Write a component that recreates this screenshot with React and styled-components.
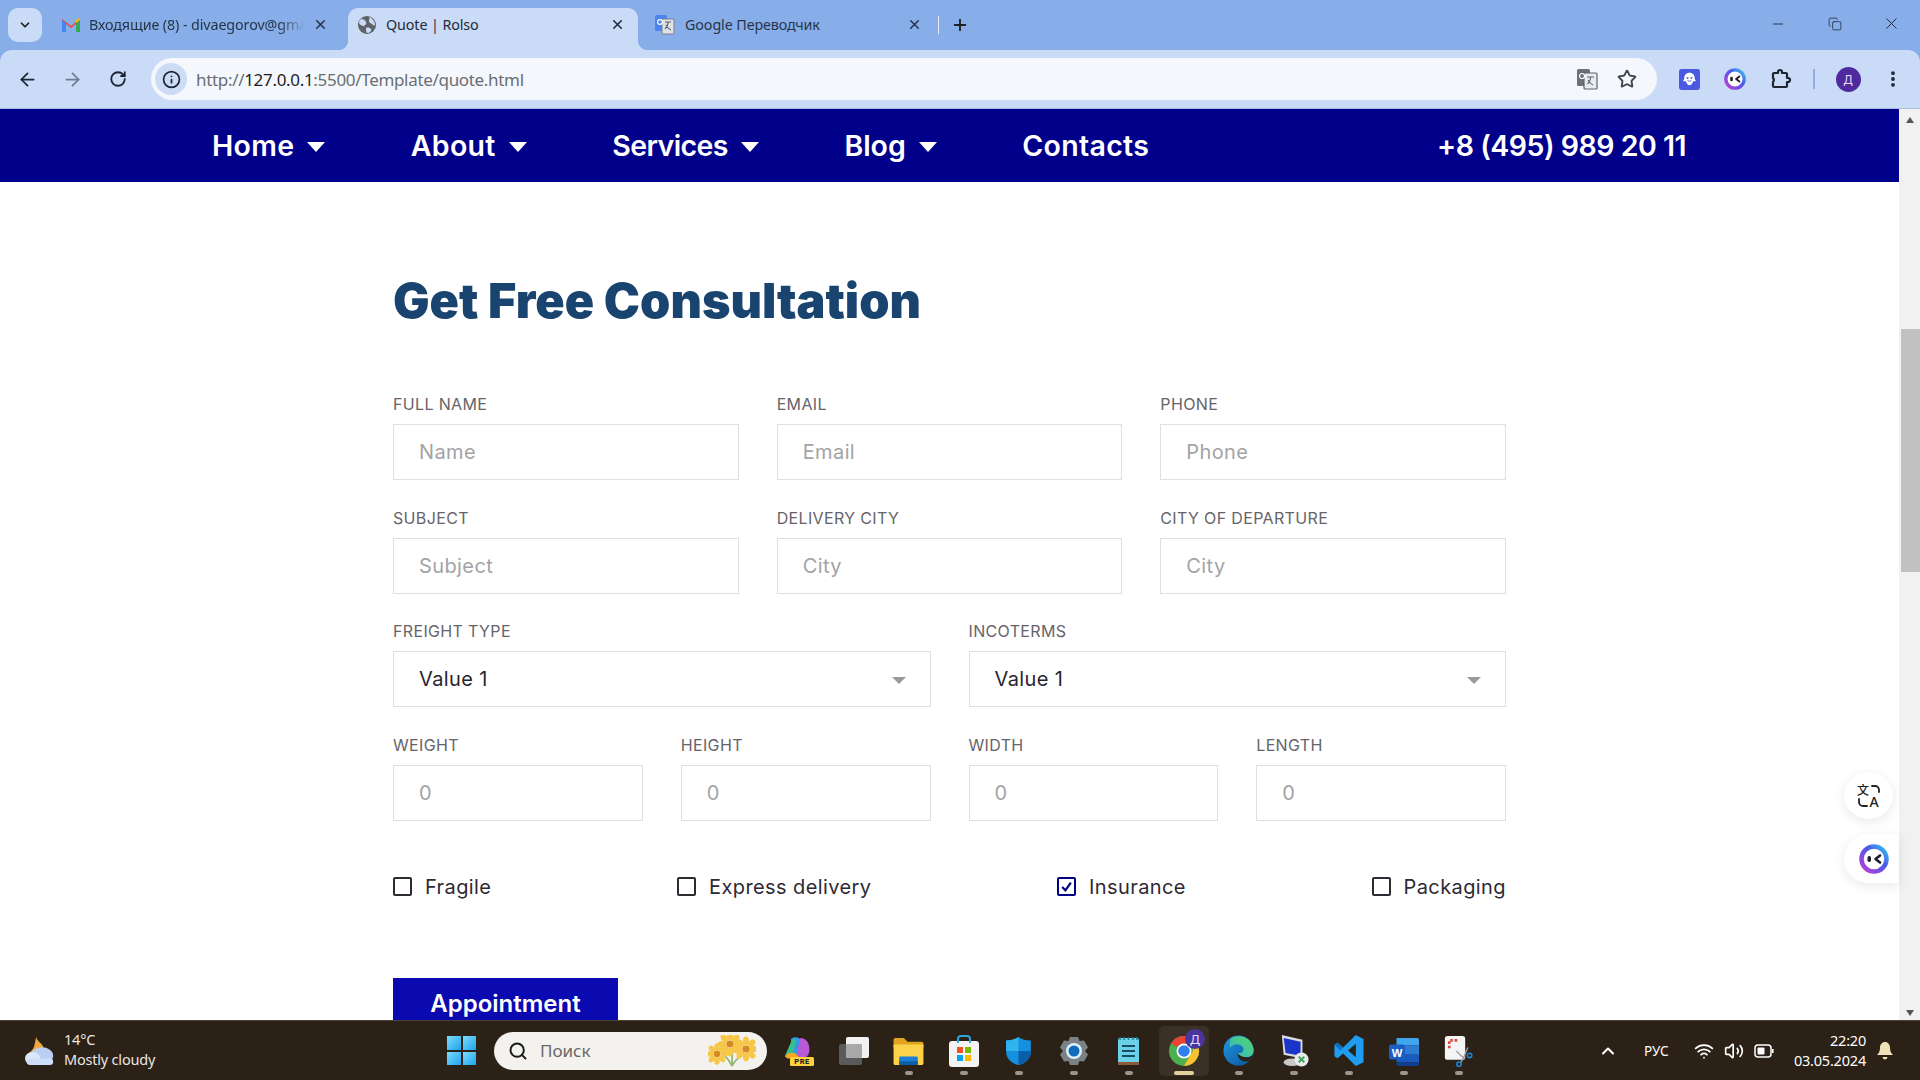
import React from "react";
import styled, { createGlobalStyle } from "styled-components";
import { ChevronDown, X, Plus, Minus, ArrowLeft, ArrowRight, RotateCw, Info, Star, MoreVertical, Search, ChevronUp, Wifi, Volume2, Copy } from "lucide-react";

const Global = createGlobalStyle`
  html, body { margin: 0; padding: 0; height: 100%; background: #fff; overflow: hidden; }
  #root { height: 1080px; }
  * { box-sizing: border-box; }
`;
const Screen = styled.div`
  width: 1920px; height: 1080px; display: flex; flex-direction: column; overflow: hidden; position: relative; background: #87aee9;
  font-family: "Inter", "Liberation Sans", sans-serif;
`;
/* ---------- browser chrome ---------- */
const TabStrip = styled.div`
  height: 50px; flex: none; display: flex; align-items: flex-end; padding-left: 8px;
  font-family: "Noto Sans", sans-serif; color: #1f1f1f; position: relative;
`;
const TabMenu = styled.div`
  width: 34px; height: 34px; border-radius: 10px; background: #c9dbf6; display: flex; align-items: center; justify-content: center;
  margin: 0 16px 8px 0;
`;
const Tab = styled.div`
  width: ${p => p.$w}px; height: 42px; display: flex; align-items: center; gap: ${p => p.$gap || 10}px; flex: none; position: relative;
  padding: 0 ${p => p.$pr || 13}px 9px ${p => p.$pl || 10}px; font-size: 14.3px; letter-spacing: -0.1px; border-radius: 10px 10px 0 0;
  background: ${p => p.$active ? "#c9dbf6" : "transparent"};
  color: ${p => p.$active ? "#1f2a3a" : "#27354a"};
  ${p => p.$active ? `
    &::before, &::after { content: ""; position: absolute; bottom: 0; width: 10px; height: 10px; }
    &::before { left: -10px; background: radial-gradient(circle at 0 0, transparent 10px, #c9dbf6 10.5px); }
    &::after { right: -10px; background: radial-gradient(circle at 100% 0, transparent 10px, #c9dbf6 10.5px); }
  ` : ""}
`;
const TabTitle = styled.span`
  flex: 1; white-space: nowrap; overflow: hidden;
  ${p => p.$fade ? "-webkit-mask-image: linear-gradient(to right, #000 88%, transparent);" : ""}
`;
const TabPlus = styled.div`
  display: flex; align-items: center; height: 42px; padding-bottom: 9px; gap: 12px; margin-left: 0;
`;
const TabDivider = styled.div`
  width: 1px; height: 18px; background: #e6eefb;
`;
const WindowControls = styled.div`
  margin-left: auto; height: 50px; display: flex; align-items: center; padding: 0 0 3px 0;
`;
const WindowButton = styled.div`
  width: 57px; display: flex; align-items: center; justify-content: center; color: #1d2532;
`;
const Toolbar = styled.div`
  height: 59px; flex: none; background: #c9dbf6; border-bottom: 1px solid #a9bfe2; display: flex; align-items: center; padding: 0 0 0 13px;
  border-radius: 12px 12px 0 0; color: #2a3444;
`;
const NavIcon = styled.div`
  width: 28px; display: flex; justify-content: center; margin-right: ${p => p.$mr || 17}px;
  color: ${p => p.$muted ? "#6f7d92" : "#1d2532"};
`;
const Omnibox = styled.div`
  width: 1506px; height: 42px; border-radius: 21px; background: #f4f7fc; margin-left: -2px; display: flex; align-items: center; padding: 0 10px 0 4px;
`;
const SiteInfo = styled.div`
  width: 32px; height: 32px; border-radius: 50%; background: #cddcf4; display: flex; align-items: center; justify-content: center; margin-right: 9px; color: #1d2532;
`;
const Url = styled.div`
  flex: 1; font-family: "Noto Sans", sans-serif; font-size: 17px; letter-spacing: -0.32px; color: #6a6e75;
  b { font-weight: 400; color: #1f1f1f; }
`;
const OmniAction = styled.div`
  width: 40px; display: flex; justify-content: center; color: #3f4650;
`;
const ExtArea = styled.div`
  flex: 1; display: flex; align-items: center; padding-left: 10px; color: #1d2532;
`;
const ExtSlot = styled.div`
  width: 45px; display: flex; justify-content: center;
`;
const ExtDivider = styled.div`
  width: 1.500px; height: 20px; background: #93b0de; margin: 0 21px 0 11px;
`;
const Avatar = styled.div`
  width: 25px; height: 25px; border-radius: 50%; background: #4f2a9e; color: #e9ddff; font-size: 12px; display: flex; align-items: center; justify-content: center;
  font-family: "Noto Sans", sans-serif; margin-right: 22px;
`;
/* ---------- page viewport ---------- */
const Viewport = styled.div`
  flex: 1; min-height: 0; display: flex; position: relative; overflow: hidden;
`;
const Page = styled.div`
  flex: 1; min-width: 0; overflow: hidden; background: #fff;
`;
const Nav = styled.nav`
  height: 73px; background: #00008b; display: flex; align-items: center; padding: 0 213px 0 212px; color: #fff; gap: 85.500px;
  font-family: "Inter", sans-serif; font-weight: 600; font-size: 28.5px;
`;
const NavItem = styled.div`
  display: flex; align-items: center; gap: 13px; white-space: nowrap; letter-spacing: ${p => p.$ls ?? 0.3}px;
`;
const Caret = styled.span`
  width: 0; height: 0; border-left: 9px solid transparent; border-right: 9px solid transparent; border-top: 10px solid #fff; margin-top: 3px;
`;
const Phone = styled.div`
  margin-left: auto; white-space: nowrap; letter-spacing: -0.5px;
`;
const Form = styled.div`
  width: 1113px; margin: 0 0 0 393px; padding-top: 89px;
`;
const Title = styled.h1`
  margin: 0 0 64px; font-family: "Inter", sans-serif; font-weight: 900; font-size: 48.5px; line-height: 60px; color: #1a4470; letter-spacing: 0;
`;
const Grid = styled.div`
  display: grid; grid-template-columns: repeat(${p => p.$cols}, 1fr); column-gap: 38px; margin-bottom: 28.700px;
`;
const Field = styled.div``;
const Label = styled.div`
  font-family: "Inter", sans-serif; font-size: 16px; line-height: 18px; margin-bottom: 11px; color: #66646a; letter-spacing: 0.35px;
`;
const Input = styled.div`
  height: 56px; border: 1px solid #dfdfdf; display: flex; align-items: center; padding: 0 25px; font-family: "Inter", sans-serif; font-size: 20px;
  letter-spacing: 0.4px; color: ${p => p.$value ? "#2a2430" : "#a3a3a6"}; background: #fff;
`;
const SelectCaret = styled.span`
  margin-left: auto; margin-right: -1px; width: 0; height: 0; border-left: 7px solid transparent; border-right: 7px solid transparent; border-top: 7px solid #9a9a9a; margin-top: 3px;
`;
const Checks = styled.div`
  display: flex; justify-content: space-between; padding-top: 24px;
`;
const CheckItem = styled.div`
  display: flex; align-items: center; gap: 13px; font-family: "Inter", sans-serif; font-size: 20px; line-height: 26px; color: #2e2a33; letter-spacing: 0.4px;
`;
const Box = styled.span`
  width: 19px; height: 19px; border-radius: 2px; border: 2px solid ${p => p.$on ? "#00008b" : "#2e2a33"}; display: flex; align-items: center; justify-content: center; flex: none;
`;
const Button = styled.div`
  margin-top: 78px; width: 225px; height: 52px; background: #0a0ab0; color: #fff; display: flex; align-items: center; justify-content: center;
  font-family: "Inter", sans-serif; font-weight: 600; font-size: 24px;
`;
const Scrollbar = styled.div`
  width: 21px; flex: none; background: #f1f1f1; position: relative; display: flex; flex-direction: column; align-items: center; justify-content: space-between; padding: 8px 0 4px;
`;
const ScrollThumb = styled.div`
  position: absolute; left: 2px; right: 0; top: 220px; height: 243px; background: #c1c1c1;
`;
const ScrollArrow = styled.span`
  width: 0; height: 0; border-left: 4px solid transparent; border-right: 4px solid transparent;
  ${p => p.$down ? "border-top: 6px solid #555;" : "border-bottom: 6px solid #555;"}
`;
const FloatButton = styled.div`
  position: absolute; right: ${p => p.$right}px; top: ${p => p.$top}px; width: ${p => p.$w}px; height: ${p => p.$h}px; background: #fff;
  border-radius: ${p => p.$tab ? "24px 0 0 24px" : "50%"}; box-shadow: 0 3px 12px rgba(0,0,0,.09); display: flex; align-items: center; justify-content: center; color: #333; z-index: 2;
  ${p => p.$tab ? "padding-left: 4px;" : ""}
`;
/* ---------- taskbar ---------- */
const Taskbar = styled.div`
  height: 60px; flex: none; background: #2b2117; border-top: 1px solid #4a433b; display: flex; align-items: center; color: #fff; position: relative;
  font-family: "Noto Sans", sans-serif;
`;
const Weather = styled.div`
  width: 447px; flex: none; display: flex; align-items: center; padding-left: 24px; gap: 8px;
`;
const WeatherText = styled.div`
  font-size: 14.500px; line-height: 20px; letter-spacing: -0.2px; color: #e9e6e2; margin-top: -3px;
`;
const Apps = styled.div`
  display: flex; align-items: center; height: 59px;
`;
const WinLogo = styled.div`
  width: 29px; height: 29px; display: grid; grid-template-columns: 1fr 1fr; gap: 2px; margin-right: 18px;
  span { background: linear-gradient(135deg,#7fdcfb,#1aa3ee); }
`;
const SearchBox = styled.div`
  width: 273px; height: 38px; border-radius: 20px; background: #f4f2ee; display: flex; align-items: center; padding: 0 11px 0 14px; gap: 12px; color: #1b1b1b; font-size: 17px; margin-right: 4px;
`;
const SearchText = styled.span`
  flex: 1; color: #6a6864;
`;
const AppSlot = styled.div`
  width: 50px; height: 50px; margin: 0 2.500px; display: flex; align-items: center; justify-content: center; position: relative; flex: none;
  ${p => p.$active ? "background: #3a3026; border-radius: 5px;" : ""}
`;
const Dot = styled.span`
  position: absolute; bottom: 1px; left: 50%; transform: translateX(-50%); width: ${p => p.$active ? 20 : 8}px; height: 4px; border-radius: 2px; background: ${p => p.$active ? "#e0d19f" : "#9a9590"};
`;
const Tray = styled.div`
  margin-left: auto; display: flex; align-items: center; padding-right: 26px; color: #fff;
`;
const TrayIcon = styled.div`
  display: flex; margin-right: ${p => p.$mr || 0}px;
`;
const Lang = styled.div`
  font-size: 13.500px; margin-right: 25px; letter-spacing: 0.2px;
`;
const Clock = styled.div`
  text-align: right; font-size: 14.500px; line-height: 20px; margin: -2px 10px 0 0; letter-spacing: -0.2px;
`;

const Gmail = () => (
  <svg width="20" height="16" viewBox="0 0 20 16"><path d="M1 15V2l9 7 9-7v13h-4V7l-5 4-5-4v8z" fill="#ea4335"/><path d="M1 15V3l4 3v9z" fill="#4285f4"/><path d="M15 15V6l4-3v12z" fill="#34a853"/><path d="M15 6l4-3V1l-4 2z" fill="#fbbc04"/></svg>
);
const Globe = () => (
  <svg width="18" height="18" viewBox="0 0 18 18"><circle cx="9" cy="9" r="9" fill="#5f6368"/><path d="M3 3c3 0 4 1 5 3s-1 3-2 4-2-1-3-1-2-2-2-3zM11 1c3 1 6 4 6 8-1 1-2 0-3-1s-3-1-3-3 1-2 0-4zM8 12c2-1 4 0 5 1s-1 4-3 4-2-3-2-5z" fill="#c9dbf6"/></svg>
);
const Translate = () => (
  <svg width="20" height="20" viewBox="0 0 20 20"><rect x="0" y="0" width="12" height="16" rx="1.500" fill="#4d84ee"/><rect x="7" y="4" width="12" height="15" rx="1" fill="#dfe3e8" stroke="#7a8088" strokeWidth="1"/><path d="M10 7h6M13 7v1c0 3-2 5-3 6M11 10c1 2 3 4 5 5" fill="none" stroke="#5f6368" strokeWidth="1.200"/><circle cx="5" cy="7" r="2.400" fill="none" stroke="#fff" strokeWidth="1.200"/></svg>
);
const TranslateGray = () => (
  <svg width="22" height="22" viewBox="0 0 22 22"><rect x="1" y="1" width="13" height="17" rx="1.500" fill="#6b6f76"/><rect x="8" y="5" width="13" height="16" rx="1" fill="#e7ecf4" stroke="#5f6368" strokeWidth="1.200"/><path d="M11 9h7M14.500 9v1c0 3-2 5-3 6M12 12c1 2 3 4 5 5" fill="none" stroke="#5f6368" strokeWidth="1.100"/><circle cx="6" cy="8" r="2.500" fill="none" stroke="#fff" strokeWidth="1.200"/></svg>
);
const ExtGhost = () => (
  <svg width="21" height="21" viewBox="0 0 22 22"><rect width="22" height="22" rx="2.500" fill="#4a5ae0"/><path d="M11 4c3.500 0 5.500 2.500 5.500 5.500 0 1.500.8 2.500 1.300 3-1 .5-2.300.5-3 .3C14 15.500 12.500 17 11 17s-3-1.500-3.800-4.200c-.7.2-2 .2-3-.3.500-.5 1.300-1.500 1.300-3C5.500 6.500 7.500 4 11 4z" fill="#fff"/><circle cx="9" cy="9.500" r="1" fill="#4a5ae0"/><circle cx="13" cy="9.500" r="1" fill="#4a5ae0"/><path d="M9 12c1 1 3 1 4 0" stroke="#4a5ae0" strokeWidth="1" fill="none"/></svg>
);
const Monica = ({ size = 22, id = "mg" }) => (
  <svg width={size} height={size} viewBox="0 0 30 30">
    <defs><linearGradient id={id} x1="0" y1="1" x2="1" y2="0"><stop offset="0" stopColor="#c03bd6"/><stop offset=".6" stopColor="#4a5ae8"/><stop offset="1" stopColor="#36c6ee"/></linearGradient></defs>
    <circle cx="15" cy="15" r="12.500" fill="#fff" stroke={`url(#${id})`} strokeWidth="4.500"/>
    <rect x="8.500" y="12" width="3.500" height="6" rx="1.700" fill="#1d1d2b"/>
    <path d="M21 11.500l-4.500 3.500 4.500 3.500" fill="none" stroke="#1d1d2b" strokeWidth="2.600" strokeLinecap="round" strokeLinejoin="round"/>
  </svg>
);
const ExtensionPuzzle = () => (
  <svg width="24" height="24" viewBox="0 0 24 24" fill="none" stroke="#1d2532" strokeWidth="2.200" strokeLinejoin="round"><path d="M10 5a2 2 0 0 1 4 0v1h4a1 1 0 0 1 1 1v4h1a2 2 0 0 1 0 4h-1v4a1 1 0 0 1-1 1H6a1 1 0 0 1-1-1v-4a3 3 0 0 0 0-4V7a1 1 0 0 1 1-1h4z"/></svg>
);
const FloatTranslate = () => (
  <svg width="32" height="32" viewBox="-4 -4 32 32" fill="none" stroke="#222" strokeWidth="1.800">
    <text x="0" y="11" fontSize="12" fontFamily="Noto Sans CJK SC" fontWeight="500" fill="#222" stroke="none">文</text>
    <text x="12.500" y="23" fontSize="14" fontFamily="Noto Sans" fontWeight="500" fill="#222" stroke="none">A</text>
    <path d="M15 2h3a4 4 0 0 1 4 4v2M2 15v3a4 4 0 0 0 4 4h4" strokeLinecap="round"/>
  </svg>
);
const Copilot = () => (
  <svg width="30" height="30" viewBox="0 0 30 30"><path d="M7 3c3-3 9-2 11 2l4 13H8z" fill="#2f9be8"/><path d="M1 20 7 6c1-3 3-4 5-2l-4 18z" fill="#39c08a"/><path d="M16 2c5 0 8 3 9 8 1 5 0 9-3 11H12z" fill="#b65ad6"/><path d="M1 20c1 3 5 3 8 2l6-1-4-4H5z" fill="#f6a623"/><rect x="6" y="21" width="24" height="9" rx="1.500" fill="#ffd23f"/><text x="18" y="28.300" fontSize="7.500" fontWeight="800" fontFamily="Roboto" textAnchor="middle" letterSpacing=".5" fill="#222">PRE</text></svg>
);
const TaskView = () => (
  <svg width="32" height="30" viewBox="0 0 32 30"><rect x="1" y="8" width="23" height="21" rx="2" fill="#5a5a5a"/><rect x="8" y="1" width="23" height="21" rx="2" fill="#f2f2f2"/><rect x="8" y="8" width="16" height="14" rx="1" fill="#a9a9a9"/></svg>
);
const Folder = () => (
  <svg width="31" height="28" viewBox="0 0 32 30"><path d="M0 3a2 2 0 012-2h9l4 4h15a2 2 0 012 2v4H0z" fill="#e0a420"/><path d="M0 8h32v20a2 2 0 01-2 2H2a2 2 0 01-2-2z" fill="#fbd24a"/><rect x="6" y="21" width="20" height="9" rx="1.500" fill="#1d7fd6"/><rect x="6" y="26" width="20" height="4" fill="#0f5fa8"/></svg>
);
const Store = () => (
  <svg width="30" height="32" viewBox="0 0 30 32"><rect x="0" y="6" width="30" height="26" rx="3" fill="#f3f3f3"/><path d="M9 8V4a3 3 0 013-3h6a3 3 0 013 3v4" fill="none" stroke="#2aa5dd" strokeWidth="2"/><rect x="8" y="12" width="6" height="6" fill="#f25022"/><rect x="16" y="12" width="6" height="6" fill="#7fba00"/><rect x="8" y="20" width="6" height="6" fill="#00a4ef"/><rect x="16" y="20" width="6" height="6" fill="#ffb900"/></svg>
);
const Shield = () => (
  <svg width="29" height="30" viewBox="0 0 30 34"><path d="M15 1c4 3 9 4 14 4v13c0 8-7 13-14 15C8 31 1 26 1 18V5c5 0 10-1 14-4z" fill="#1490df"/><path d="M15 17h14v1c0 8-7 13-14 15z" fill="#0a5ea8"/><path d="M1 5c5 0 10-1 14-4v16H1z" fill="#2fb4ee"/></svg>
);
const Gear = () => (
  <svg width="30" height="30" viewBox="0 0 30 30"><path d="M11 1h8l1.500 4 4.500-.5 4 7-3 3.500 3 3.500-4 7-4.500-.5L19 29h-8l-1.500-4-4.500.5-4-7L4 15l-3-3.500 4-7 4.500.5z" fill="#7a8288"/><circle cx="15" cy="15" r="8" fill="#dff0fb"/><circle cx="15" cy="15" r="5.500" fill="#0f6cbd"/></svg>
);
const Notepad = () => (
  <svg width="23" height="30" viewBox="0 0 23 30"><rect x="1" y="2" width="21" height="27" rx="2" fill="#6bd0e8"/><rect x="1" y="26" width="21" height="3" fill="#8a5a3a"/><path d="M5 10h13M5 15h13M5 20h13" stroke="#14505f" strokeWidth="2"/><path d="M3 1v3M7 1v3M11.500 1v3M16 1v3M20 1v3" stroke="#1c7d95" strokeWidth="1.500"/></svg>
);
const Chrome = () => (
  <svg width="50" height="50" viewBox="0 0 50 50">
    <circle cx="25" cy="25" r="15" fill="#4caf50"/>
    <path d="M25 10a15 15 0 0113 7.500H25a7.500 7.500 0 00-6.500 3.750L12 17.500A15 15 0 0125 10z" fill="#ea4335"/>
    <path d="M38 17.500a15 15 0 01-13 22.500l6.500-11.250a7.500 7.500 0 000-11.250z" fill="#fbc02d"/>
    <circle cx="25" cy="25" r="7.500" fill="#fff"/><circle cx="25" cy="25" r="5.800" fill="#2f80ed"/>
    <circle cx="36" cy="13" r="10" fill="#4a359c"/>
    <text x="36" y="18" fontSize="13" fontFamily="Noto Sans" textAnchor="middle" fill="#e5dcff">Д</text>
  </svg>
);
const Edge = () => (
  <svg width="31" height="31" viewBox="0 0 34 34"><defs><linearGradient id="eg" x1="0" y1="0" x2="1" y2="1"><stop offset="0" stopColor="#1f9be0"/><stop offset="1" stopColor="#0c4f9c"/></linearGradient><linearGradient id="eh" x1="0" y1="1" x2="1" y2="0"><stop offset="0" stopColor="#2fb8c8"/><stop offset="1" stopColor="#5ad46b"/></linearGradient></defs><circle cx="17" cy="17" r="16.500" fill="url(#eg)"/><path d="M9 3.500C18-1.500 31 2 33.500 15c1 6-3 9.500-8 9.500-4 0-8-1.500-9.500-4.500 5.500.5 8-3 5.500-7-3-4-10-4-14 1C7 10 7 6 9 3.500z" fill="url(#eh)"/><path d="M16 20c2 3 6 4.500 9.500 4.500 3 0 6-1 7.500-3.500-1.500 3.500-3 6-5 8-6 1-12-2-12-9z" fill="#2b2117"/></svg>
);
const Vm = () => (
  <svg width="30" height="34" viewBox="0 0 32 36"><path d="M3 1l22 5v20L5 22z" fill="#d8dbe3"/><path d="M5 4l18 4v15L7 20z" fill="#1c34c8"/><ellipse cx="14" cy="30" rx="9" ry="4" fill="#c8c8c8"/><circle cx="24" cy="27" r="7.500" fill="#eaeaea"/><path d="M21 24l6 6M27 24l-6 6" stroke="#3aa655" strokeWidth="2"/></svg>
);
const VsCode = () => (
  <svg width="30" height="31" viewBox="0 0 30 32"><path d="M22 0l8 4v24l-8 4L9 19l-6 5-3-2v-12l3-2 6 5z" fill="#1f9cf0"/><path d="M22 9l-8 7 8 7z" fill="#2b2117"/><path d="M0 10l3-2 6 5-3 3z" fill="#0f6fc0"/></svg>
);
const Word = () => (
  <svg width="30" height="30" viewBox="0 0 32 32"><path d="M8 2h22a2 2 0 012 2v6H8z" fill="#41a5ee"/><rect x="8" y="10" width="24" height="10" fill="#2b7cd3"/><rect x="8" y="20" width="24" height="8" fill="#185abd"/><path d="M8 28h24v2a2 2 0 01-2 2H10a2 2 0 01-2-2z" fill="#103f91"/><rect x="0" y="9" width="17" height="16" rx="2" fill="#1a5dc4"/><text x="8.500" y="22" fontSize="12" fontWeight="700" fontFamily="Liberation Sans" textAnchor="middle" fill="#fff">W</text></svg>
);
const Snip = () => (
  <svg width="30" height="32" viewBox="0 0 34 36"><rect x="1" y="1" width="23" height="27" rx="3" fill="#f4f4f4"/><path d="M6 15V6h10" fill="none" stroke="#d84a3f" strokeWidth="3" strokeDasharray="3 2"/><path d="M14 18l6 6 4 3M27 14l-5 12-3 5" fill="none" stroke="#9aa0a6" strokeWidth="1.600"/><circle cx="17" cy="33" r="2.500" fill="none" stroke="#1a86d6" strokeWidth="1.800"/><circle cx="29" cy="23" r="2.500" fill="none" stroke="#1a86d6" strokeWidth="1.800"/></svg>
);
const Flower = ({ x, y, r }) => (
  <g>
    {[0, 45, 90, 135, 180, 225, 270, 315].map(a => (
      <ellipse key={a} cx={x} cy={y - r} rx={r * 0.38} ry={r * 0.55} fill="#f6c748" transform={`rotate(${a} ${x} ${y})`} />
    ))}
    <circle cx={x} cy={y} r={r * 0.45} fill="#d68a1f" />
  </g>
);
const Flowers = () => (
  <svg width="48" height="32" viewBox="0 0 48 32"><path d="M24 31c-3-6-6-10-11-13M24 31c0-7 0-12 1-18M24 31c3-6 7-9 12-13" stroke="#93b878" strokeWidth="1.800" fill="none"/>
    <Flower x={9} y={19} r={7} /><Flower x={22} y={9} r={8} /><Flower x={38} y={14} r={8} />
  </svg>
);
const Cloud = () => (
  <svg width="32" height="30" viewBox="0 0 34 32"><path d="M13 1c1 5 7 7 8 12 1 3-1 5-4 6H4c4-3 6-5 7-9 1-3 1-6 2-9z" fill="#f3a93a"/><ellipse cx="19" cy="21" rx="12" ry="9" fill="#b9cff2"/><ellipse cx="9" cy="24" rx="8" ry="7" fill="#dbe7fb"/><rect x="3" y="24" width="28" height="7" rx="3.500" fill="#cfdef7"/></svg>
);
const Battery = () => (
  <svg width="20" height="14" viewBox="0 0 20 14"><rect x="1" y="1" width="16" height="12" rx="3" fill="none" stroke="#fff" strokeWidth="1.500"/><rect x="3.500" y="3.500" width="7" height="7" rx="1" fill="#fff"/><rect x="18" y="5" width="1.600" height="4" fill="#fff"/></svg>
);
const BellFill = () => (
  <svg width="18" height="20" viewBox="0 0 18 20"><path d="M9 1c3 0 5 2.500 5 6 0 3 1 5 3 7H1c2-2 3-4 3-7 0-3.500 2-6 5-6z" fill="#f0e2b8"/><path d="M6.500 16h5a2.500 2.500 0 01-5 0z" fill="#f0e2b8"/></svg>
);

const fields1 = [["FULL NAME", "Name"], ["EMAIL", "Email"], ["PHONE", "Phone"]];
const fields2 = [["SUBJECT", "Subject"], ["DELIVERY CITY", "City"], ["CITY OF DEPARTURE", "City"]];
const sizes = ["WEIGHT", "HEIGHT", "WIDTH", "LENGTH"];
const apps = [Copilot, TaskView, Folder, Store, Shield, Gear, Notepad];
const apps2 = [Edge, Vm, VsCode, Word, Snip];

export default function App() {
  return (
    <Screen>
      <Global />
      <TabStrip>
        <TabMenu><ChevronDown size={14} strokeWidth={3} /></TabMenu>
        <Tab $w={290} $pl={3} $pr={20} $gap={8}><Gmail /><TabTitle $fade>Входящие (8) - divaegorov@gmail.com</TabTitle><X size={15} strokeWidth={2.500} /></Tab>
        <Tab $w={290} $active><Globe /><TabTitle>Quote | Rolso</TabTitle><X size={15} strokeWidth={2.500} /></Tab>
        <Tab $w={300} $pl={17} $pr={16}><Translate /><TabTitle>Google Переводчик</TabTitle><X size={15} strokeWidth={2.500} /></Tab>
        <TabPlus><TabDivider /><Plus size={18} strokeWidth={2.500} /></TabPlus>
        <WindowControls>
          <WindowButton><Minus size={16} strokeWidth={1.300} /></WindowButton>
          <WindowButton><Copy size={14} strokeWidth={1.300} /></WindowButton>
          <WindowButton><X size={19} strokeWidth={1.200} /></WindowButton>
        </WindowControls>
      </TabStrip>
      <Toolbar>
        <NavIcon><ArrowLeft size={21} strokeWidth={2} /></NavIcon>
        <NavIcon $muted $mr={18}><ArrowRight size={21} strokeWidth={2} /></NavIcon>
        <NavIcon $mr={21}><RotateCw size={18} strokeWidth={2.400} /></NavIcon>
        <Omnibox>
          <SiteInfo><Info size={19} strokeWidth={2.200} /></SiteInfo>
          <Url>http://<b>127.0.0.1</b>:5500/Template/quote.html</Url>
          <OmniAction><TranslateGray /></OmniAction>
          <OmniAction><Star size={20} strokeWidth={2.300} /></OmniAction>
        </Omnibox>
        <ExtArea>
          <ExtSlot><ExtGhost /></ExtSlot>
          <ExtSlot><Monica id="mg1" /></ExtSlot>
          <ExtSlot><ExtensionPuzzle /></ExtSlot>
          <ExtDivider />
          <Avatar>Д</Avatar>
          <MoreVertical size={20} strokeWidth={2.600} />
        </ExtArea>
      </Toolbar>
      <Viewport>
        <Page>
          <Nav>
            <NavItem>Home <Caret /></NavItem>
            <NavItem>About <Caret /></NavItem>
            <NavItem $ls={-0.6}>Services <Caret /></NavItem>
            <NavItem $ls={0}>Blog <Caret /></NavItem>
            <NavItem>Contacts</NavItem>
            <Phone>+8 (495) 989 20 11</Phone>
          </Nav>
          <Form>
            <Title>Get Free Consultation</Title>
            <Grid $cols={3}>
              {fields1.map(([l, p]) => <Field key={l}><Label>{l}</Label><Input>{p}</Input></Field>)}
            </Grid>
            <Grid $cols={3}>
              {fields2.map(([l, p]) => <Field key={l}><Label>{l}</Label><Input>{p}</Input></Field>)}
            </Grid>
            <Grid $cols={2}>
              {["FREIGHT TYPE", "INCOTERMS"].map(l => <Field key={l}><Label>{l}</Label><Input $value>Value 1<SelectCaret /></Input></Field>)}
            </Grid>
            <Grid $cols={4}>
              {sizes.map(l => <Field key={l}><Label>{l}</Label><Input>0</Input></Field>)}
            </Grid>
            <Checks>
              <CheckItem><Box />Fragile</CheckItem>
              <CheckItem><Box />Express delivery</CheckItem>
              <CheckItem><Box $on><svg width="13" height="13" viewBox="0 0 12 12"><path d="M2 6.500l3 3 5-7" fill="none" stroke="#00008b" strokeWidth="2" /></svg></Box>Insurance</CheckItem>
              <CheckItem><Box />Packaging</CheckItem>
            </Checks>
            <Button>Appointment</Button>
          </Form>
        </Page>
        <Scrollbar>
          <ScrollArrow />
          <ScrollThumb />
          <ScrollArrow $down />
        </Scrollbar>
        <FloatButton $right={27} $top={663} $w={49} $h={47}><FloatTranslate /></FloatButton>
        <FloatButton $tab $right={21} $top={725} $w={55} $h={49}><Monica size={30} id="mg2" /></FloatButton>
      </Viewport>
      <Taskbar>
        <Weather>
          <Cloud />
          <WeatherText>14°C<br />Mostly cloudy</WeatherText>
        </Weather>
        <Apps>
          <WinLogo><span /><span /><span /><span /></WinLogo>
          <SearchBox><Search size={20} strokeWidth={2.400} /><SearchText>Поиск</SearchText><Flowers /></SearchBox>
          {apps.map((A, i) => <AppSlot key={i}><A />{i > 1 && <Dot />}</AppSlot>)}
          <AppSlot $active><Chrome /><Dot $active /></AppSlot>
          {apps2.map((A, i) => <AppSlot key={i}><A /><Dot /></AppSlot>)}
        </Apps>
        <Tray>
          <TrayIcon $mr={26}><ChevronUp size={20} strokeWidth={2.400} /></TrayIcon>
          <Lang>РУС</Lang>
          <TrayIcon $mr={10}><Wifi size={20} strokeWidth={2.200} /></TrayIcon>
          <TrayIcon $mr={10}><Volume2 size={20} strokeWidth={2} /></TrayIcon>
          <TrayIcon $mr={20}><Battery /></TrayIcon>
          <Clock>22:20<br />03.05.2024</Clock>
          <TrayIcon><BellFill /></TrayIcon>
        </Tray>
      </Taskbar>
    </Screen>
  );
}
